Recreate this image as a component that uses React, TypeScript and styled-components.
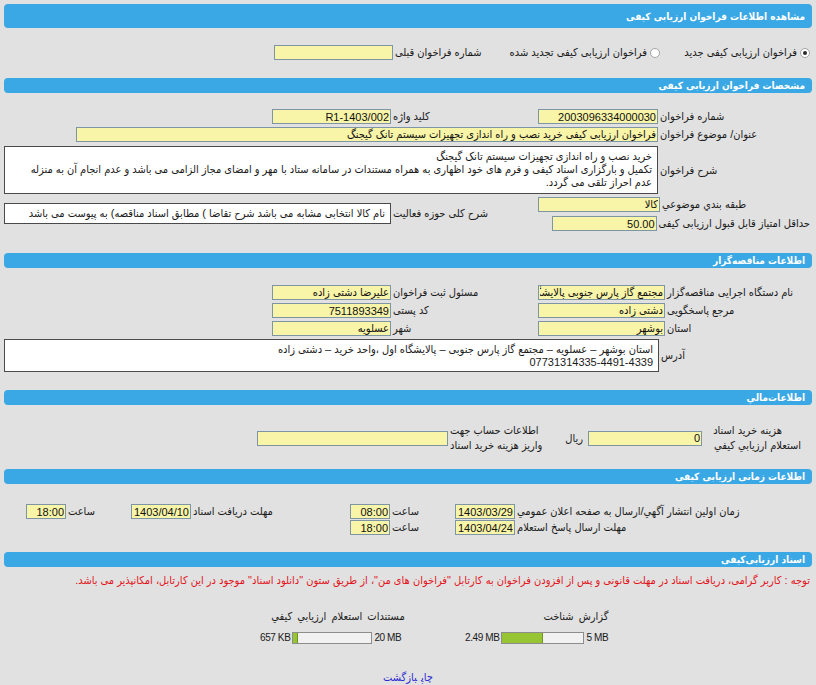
import styled, { createGlobalStyle } from "styled-components";

const GlobalStyle = createGlobalStyle`
  body {
    margin: 0;
    background: #e1e1e1;
    font-family: "Liberation Sans", "DejaVu Sans Condensed", "DejaVu Sans", sans-serif;
    font-size: 11px;
    color: #1a1a1a;
  }
`;

const Page = styled.div`
  direction: rtl;
  padding: 4px 4px 0;
`;

const Bar = styled.div<{ $tall?: boolean; $top?: number }>`
  margin-top: ${(p) => p.$top ?? 0}px;
  height: ${(p) => (p.$tall ? 24 : 15)}px;
  display: flex;
  align-items: center;
  padding-right: 7px;
  background: #3aa8e4;
  border-radius: 4px;
  color: #fff;
  font-family: "DejaVu Sans Condensed", "DejaVu Sans", sans-serif;
  font-weight: bold;
  font-size: 10px;
  white-space: nowrap;
`;

const Row = styled.div<{ $top?: number; $h?: number }>`
  display: flex;
  align-items: center;
  margin-top: ${(p) => p.$top ?? 0}px;
  min-height: ${(p) => p.$h ?? 15}px;
`;

const Stack = styled.div<{ $w: number }>`
  flex: 0 0 ${(p) => p.$w}px;
  display: flex;
  flex-direction: column;
`;

const Label = styled.div<{ $w: number; $start?: boolean }>`
  flex: 0 0 ${(p) => p.$w}px;
  box-sizing: border-box;
  padding: 0 2px;
  text-align: ${(p) => (p.$start ? "right" : "left")};
  white-space: nowrap;
`;

const Field = styled.input<{ $w: number }>`
  flex: 0 0 ${(p) => p.$w}px;
  width: ${(p) => p.$w}px;
  box-sizing: border-box;
  height: 15px;
  margin: 0;
  padding: 0 1px;
  border: 1px solid #7e95a6;
  background: #f8f4a8;
  font: inherit;
  color: #111;
  text-align: right;
  outline: none;
`;

const TextBox = styled.div<{ $w: number; $h: number }>`
  flex: 0 0 ${(p) => p.$w}px;
  box-sizing: border-box;
  height: ${(p) => p.$h}px;
  padding: 3px 5px;
  background: #fff;
  border: 1px solid #4a4a4a;
  line-height: 13px;
  white-space: nowrap;
  overflow: hidden;
`;

const Option = styled.label<{ $w: number }>`
  flex: 0 0 ${(p) => p.$w}px;
  display: flex;
  align-items: center;
  gap: 3px;
  padding-right: 2px;
  box-sizing: border-box;
  white-space: nowrap;
`;

const Radio = styled.span<{ $checked?: boolean }>`
  position: relative;
  width: 10px;
  height: 10px;
  box-sizing: border-box;
  border: 1px solid #a3a3a3;
  border-radius: 50%;
  background: #fff;

  &::after {
    content: "";
    display: ${(p) => (p.$checked ? "block" : "none")};
    position: absolute;
    inset: 2px;
    border-radius: 50%;
    background: #2a2a2a;
  }
`;

const Lines = styled.div<{ $w: number; $start?: boolean }>`
  flex: 0 0 ${(p) => p.$w}px;
  box-sizing: border-box;
  line-height: 15px;
  white-space: nowrap;
  text-align: ${(p) => (p.$start ? "right" : "left")};
  padding: 0 2px;
`;

const Line = styled.div<{ $indent?: number }>`
  padding-right: ${(p) => p.$indent ?? 0}px;
`;

const Unit = styled.div<{ $w: number }>`
  flex: 0 0 ${(p) => p.$w}px;
  box-sizing: border-box;
  padding-right: 5px;
`;

const Note = styled.div`
  margin-top: 6px;
  padding-right: 2px;
  line-height: 14px;
  color: #e3141b;
  white-space: nowrap;
`;

const Docs = styled.div`
  display: flex;
  gap: 10px;
  margin-top: 22px;
  padding-right: 106px;
`;

const DocCell = styled.div<{ $w: number; $offset: number }>`
  flex: 0 0 ${(p) => p.$w}px;
  display: flex;
  flex-direction: column;
  gap: 9px;
  --offset: ${(p) => p.$offset}px;
`;

const DocTitle = styled.div`
  text-align: center;
  line-height: 14px;
  word-spacing: 2px;
`;

const Meter = styled.div`
  direction: ltr;
  display: flex;
  align-items: center;
  padding-left: var(--offset);
  line-height: 12px;
`;

const Size = styled.span`
  white-space: nowrap;
  font-size: 10px;
  letter-spacing: -0.4px;
`;

const Track = styled.div<{ $w: number }>`
  width: ${(p) => p.$w}px;
  height: 12px;
  margin: 0 2px;
  box-sizing: border-box;
  border: 1px solid #8d8d8d;
  background: #f1f1f1;
`;

const Fill = styled.div`
  height: 100%;
  box-sizing: border-box;
  background: #96c432;
  border-right: 1px solid #6f9420;
`;

const Links = styled.div`
  margin-top: 26px;
  text-align: center;
  line-height: 14px;

  a {
    color: #2b2bd0;
    text-decoration: none;
    margin: 0 2px;
  }
`;

type Doc = { title: string; used: number; max: number; usedText: string; maxText: string; w: number; cell: number; offset: number };

const docs: Doc[] = [
  { title: "گزارش شناخت", used: 2.49, max: 5, usedText: "2.49 MB", maxText: "5 MB", w: 83, cell: 260, offset: 19 },
  { title: "مستندات استعلام ارزیابي کیفي", used: 0.657, max: 20, usedText: "657 KB", maxText: "20 MB", w: 80, cell: 196, offset: 20 },
];

const App = () => {
  return (
    <Page>
      <GlobalStyle />
      <Bar $tall>مشاهده اطلاعات فراخوان ارزیابی کیفی</Bar>

      <Row $top={17}>
        <Option $w={150}>
          <Radio $checked />
          فراخوان ارزیابی کیفی جدید
        </Option>
        <Option $w={160}>
          <Radio />
          فراخوان ارزیابی کیفی تجدید شده
        </Option>
        <Label $w={109}>شماره فراخوان قبلی</Label>
        <Field $w={119} value="" readOnly />
      </Row>

      <Bar $top={18}>مشخصات فراخوان ارزیابی کیفی</Bar>

      <Row $top={16}>
        <Label $w={154}>شماره فراخوان</Label>
        <Field $w={120} value="2003096334000030" readOnly />
        <Label $w={147}>کلید واژه</Label>
        <Field $w={119} value="R1-1403/002" readOnly />
      </Row>
      <Row $top={3}>
        <Label $w={154}>عنوان/ موضوع فراخوان</Label>
        <Field $w={582} value="فراخوان ارزیابی کیفی خرید نصب و راه اندازی تجهیزات سیستم تانک گیجنگ" readOnly />
      </Row>
      <Row $top={4}>
        <Label $w={154}>شرح فراخوان</Label>
        <TextBox $w={654} $h={48}>
          خرید نصب و راه اندازی تجهیزات سیستم تانک گیجنگ
          <br />
          تکمیل و بارگزاری اسناد کیفی و فرم های خود اظهاری به همراه مستندات در سامانه ستاد با مهر و امضای مجاز الزامی می باشد و عدم انجام آن به منزله
          <br />
          عدم احراز تلقی می گردد.
        </TextBox>
      </Row>
      <Row $top={1}>
        <Stack $w={274}>
          <Row $top={2}>
            <Label $w={152}>طبقه بندي موضوعي</Label>
            <Field $w={122} value="کالا" readOnly />
          </Row>
          <Row $top={4}>
            <Label $w={154}>حداقل امتیاز قابل قبول ارزیابی کیفی</Label>
            <Field $w={105} value="50.00" readOnly />
          </Row>
        </Stack>
        <Label $w={147}>شرح کلی حوزه فعالیت</Label>
        <TextBox $w={387} $h={21}>
          نام کالا انتخابی مشابه می باشد شرح تقاضا ) مطابق اسناد مناقصه) به پیوست می باشد
        </TextBox>
      </Row>

      <Bar $top={22}>اطلاعات مناقصه‌گزار</Bar>

      <Row $top={17}>
        <Label $w={147}>نام دستگاه اجرایی مناقصه‌گزار</Label>
        <Field $w={127} value="مجتمع گاز پارس جنوبی پالایشگاه اول" readOnly />
        <Label $w={147}>مسئول ثبت فراخوان</Label>
        <Field $w={119} value="علیرضا دشتی زاده" readOnly />
      </Row>
      <Row $top={3}>
        <Label $w={147}>مرجع پاسخگویی</Label>
        <Field $w={127} value="دشتی زاده" readOnly />
        <Label $w={147}>کد پستی</Label>
        <Field $w={119} value="7511893349" readOnly />
      </Row>
      <Row $top={3}>
        <Label $w={147}>استان</Label>
        <Field $w={127} value="بوشهر" readOnly />
        <Label $w={147}>شهر</Label>
        <Field $w={119} value="عسلویه" readOnly />
      </Row>
      <Row $top={3}>
        <Label $w={153}>آدرس</Label>
        <TextBox $w={655} $h={33}>
          استان بوشهر – عسلویه – مجتمع گاز پارس جنوبی – پالایشگاه اول ،واحد خرید – دشتی زاده
          <br />
          07731314335-4491-4339
        </TextBox>
      </Row>

      <Bar $top={18}>اطلاعات‌مالي</Bar>

      <Row $top={18} $h={30}>
        <Lines $w={110} $start>
          <Line $indent={28}>هزینه خرید اسناد</Line>
          <Line $indent={9}>استعلام ارزیابي کیفي</Line>
        </Lines>
        <Field $w={114} value="0" readOnly />
        <Unit $w={23}>ریال</Unit>
        <Lines $w={117}>
          <Line>اطلاعات حساب جهت</Line>
          <Line>واریز هزینه خرید اسناد</Line>
        </Lines>
        <Field $w={191} value="" readOnly />
      </Row>

      <Bar $top={16}>اطلاعات زمانی ارزیابی کیفی</Bar>

      <Row $top={20}>
        <Label $w={297}>زمان اولین انتشار آگهي/ارسال به صفحه اعلان عمومي</Label>
        <Field $w={60} value="1403/03/29" readOnly />
        <Label $w={65}>ساعت</Label>
        <Field $w={40} value="08:00" readOnly />
        <Label $w={159}>مهلت دریافت اسناد</Label>
        <Field $w={60} value="1403/04/10" readOnly />
        <Label $w={65}>ساعت</Label>
        <Field $w={40} value="18:00" readOnly />
      </Row>
      <Row $top={1}>
        <Label $w={297}>مهلت ارسال پاسخ استعلام</Label>
        <Field $w={60} value="1403/04/24" readOnly />
        <Label $w={65}>ساعت</Label>
        <Field $w={40} value="18:00" readOnly />
      </Row>

      <Bar $top={17}>اسناد ارزیابی‌کیفی</Bar>

      <Note>
        توجه : کاربر گرامی، دریافت اسناد در مهلت قانونی و پس از افزودن فراخوان به کارتابل "فراخوان های من"، از طریق ستون "دانلود اسناد" موجود در این کارتابل، امکانپذیر می باشد.
      </Note>

      <Docs>
        {docs.map((d) => (
          <DocCell key={d.title} $w={d.cell} $offset={d.offset}>
            <DocTitle>{d.title}</DocTitle>
            <Meter>
              <Size>{d.usedText}</Size>
              <Track $w={d.w}>
                <Fill style={{ width: `${Math.max(6, (d.used / d.max) * 100)}%` }} />
              </Track>
              <Size>{d.maxText}</Size>
            </Meter>
          </DocCell>
        ))}
      </Docs>

      <Links>
        <a href="#">چاپ</a>
        <a href="#">بازگشت</a>
      </Links>
    </Page>
  );
};

export default App;
